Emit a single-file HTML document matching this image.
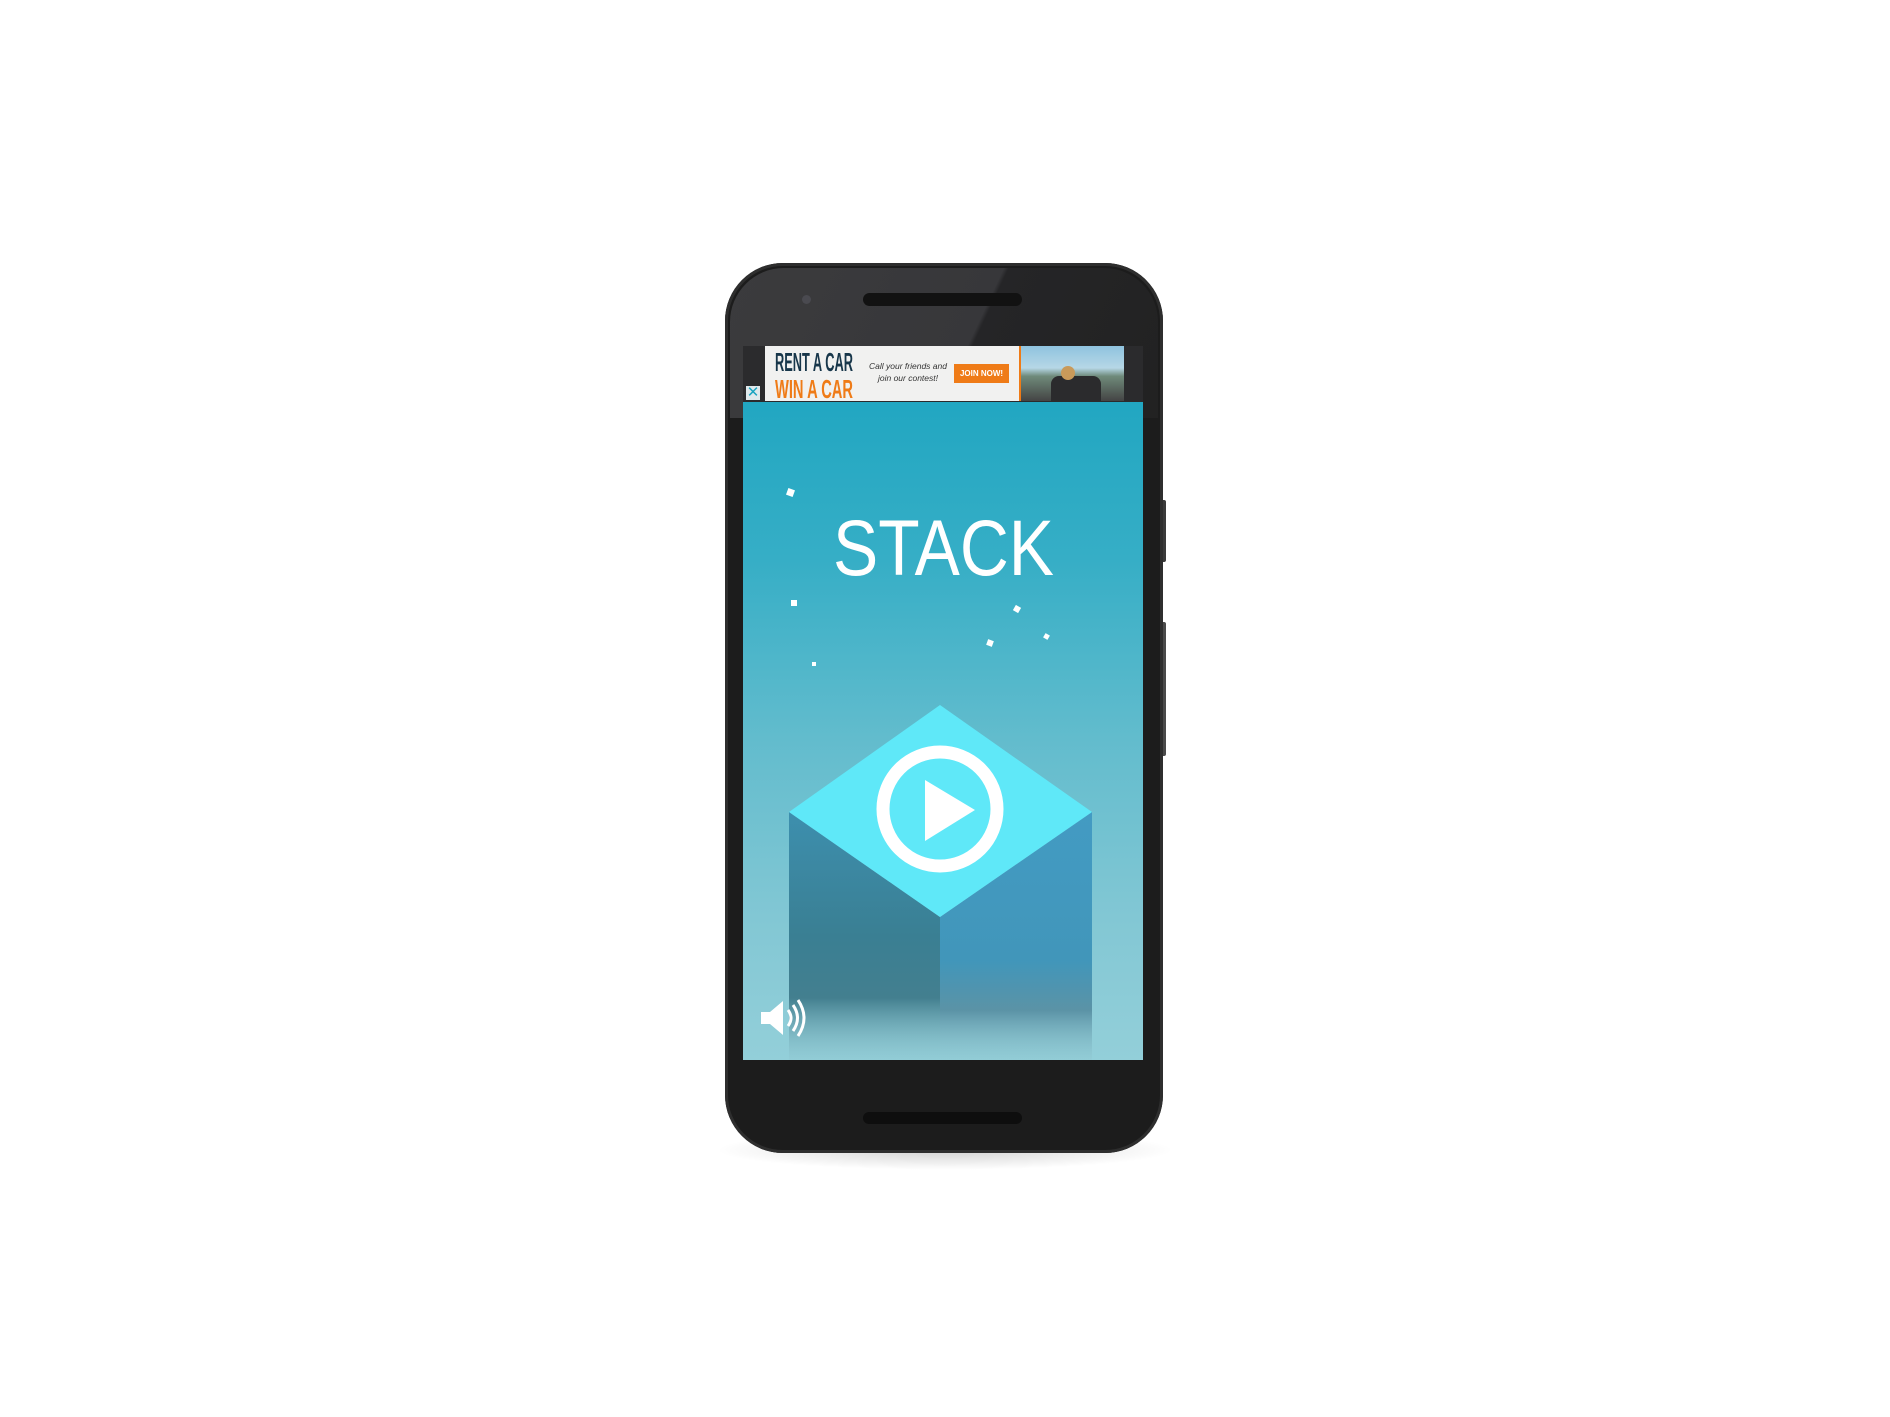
<!DOCTYPE html>
<html><head><meta charset="utf-8"><style>
html,body{margin:0;padding:0;background:#fff;}
body{width:1890px;height:1417px;position:relative;overflow:hidden;font-family:"Liberation Sans",sans-serif;}
.abs{position:absolute;}
</style></head><body>
<div class="abs" style="left:715px;top:1130px;width:460px;height:40px;border-radius:50%;background:radial-gradient(ellipse at center,rgba(0,0,0,0.18),rgba(0,0,0,0) 70%);"></div>
<div class="abs" style="left:1159px;top:500px;width:7px;height:62px;background:#3a3a3a;border-radius:2px;"></div>
<div class="abs" style="left:1159px;top:622px;width:7px;height:134px;background:#4a4a4a;border-radius:2px;"></div>
<div class="abs" style="left:725px;top:263px;width:438px;height:890px;border-radius:58px;background:#1c1c1c;box-shadow:inset 0 0 0 3px #2e2e2e;"></div>
<div class="abs" style="left:730px;top:268px;width:428px;height:150px;border-radius:54px 54px 0 0;background:linear-gradient(115deg,#3b3b3d 0%,#37373a 55%,#252527 56%,#222 100%);"></div>
<div class="abs" style="left:863px;top:293px;width:159px;height:13px;border-radius:7px;background:#121212;"></div>
<div class="abs" style="left:863px;top:1112px;width:159px;height:12px;border-radius:6px;background:#0e0e0e;"></div>
<div class="abs" style="left:802px;top:295px;width:9px;height:9px;border-radius:50%;background:#4a4a50;"></div>
<div class="abs" style="left:743px;top:346px;width:400px;height:714px;background:linear-gradient(#1aa4c0 0%,#36aec6 30%,#62bccd 55%,#82c7d4 80%,#93cfd9 100%);overflow:hidden;">
  <div class="abs" style="left:0;top:0;width:400px;height:56px;background:#2b2b2d;"></div>
  <div class="abs" style="left:3px;top:40px;width:14px;height:14px;background:#dfe9ec;color:#1aa4c0;font-size:15px;line-height:14px;text-align:center;">✕</div>
  <div class="abs" style="left:22px;top:0;width:357px;height:55px;background:#f1f1f0;">
    <svg class="abs" style="left:0;top:0" width="100" height="55">
      <text x="10" y="25" font-family="Liberation Sans, sans-serif" font-weight="bold" font-size="26" fill="#17364a" textLength="78" lengthAdjust="spacingAndGlyphs">RENT A CAR</text>
      <text x="10" y="52" font-family="Liberation Sans, sans-serif" font-weight="bold" font-size="26" fill="#ef7b17" textLength="78" lengthAdjust="spacingAndGlyphs">WIN A CAR</text>
    </svg>
    <div class="abs" style="left:100px;top:14px;width:86px;font-size:8.5px;line-height:12px;font-style:italic;color:#333;text-align:center;white-space:nowrap;">Call your friends and<br>join our contest!</div>
    <div class="abs" style="left:189px;top:18px;width:55px;height:19px;background:#ef7b17;color:#fff;font-size:8px;font-weight:bold;line-height:19px;text-align:center;">JOIN NOW!</div>
    <div class="abs" style="left:254px;top:0;width:103px;height:55px;background:linear-gradient(#8fc3df 0%,#b6d7e6 40%,#6f8a7a 55%,#444 100%);border-left:2px solid #ef7b17;">
      <div class="abs" style="left:30px;top:30px;width:50px;height:25px;background:#2b2b2d;border-radius:8px 8px 0 0;"></div>
      <div class="abs" style="left:40px;top:20px;width:14px;height:14px;border-radius:50%;background:#c99a5a;"></div>
    </div>
  </div>
  <div class="abs" style="left:44px;top:143px;width:7px;height:7px;background:#fff;transform:rotate(20deg);"></div>
  <div class="abs" style="left:48px;top:254px;width:6px;height:6px;background:#fff;"></div>
  <div class="abs" style="left:69px;top:316px;width:4px;height:4px;background:#fff;"></div>
  <div class="abs" style="left:271px;top:260px;width:6px;height:6px;background:#fff;transform:rotate(30deg);"></div>
  <div class="abs" style="left:244px;top:294px;width:6px;height:6px;background:#fff;transform:rotate(20deg);"></div>
  <div class="abs" style="left:301px;top:288px;width:5px;height:5px;background:#fff;transform:rotate(30deg);"></div>
  <svg class="abs" style="left:0;top:0" width="400" height="714" viewBox="0 0 400 714">
    <defs>
      <linearGradient id="lf" x1="0" y1="466" x2="0" y2="714" gradientUnits="userSpaceOnUse"><stop offset="0" stop-color="#3d8fae"/><stop offset="0.5" stop-color="#3a7f93"/><stop offset="0.75" stop-color="#437f8f"/><stop offset="1" stop-color="#8fc5cf" stop-opacity="0.3"/></linearGradient>
      <linearGradient id="rf" x1="0" y1="466" x2="0" y2="714" gradientUnits="userSpaceOnUse"><stop offset="0" stop-color="#439bc3"/><stop offset="0.6" stop-color="#4196ba"/><stop offset="0.8" stop-color="#5b93a6"/><stop offset="1" stop-color="#8fc5cf" stop-opacity="0.3"/></linearGradient>
    </defs>
    <text x="90" y="229" font-family="Liberation Sans, sans-serif" font-size="79" fill="#fff" textLength="221" lengthAdjust="spacingAndGlyphs">STACK</text>
    <polygon points="46,466 197,571 197,714 46,714" fill="url(#lf)"/>
    <polygon points="197,571 349,466 349,714 197,714" fill="url(#rf)"/>
    <polygon points="197,359 349,466 197,571 46,466" fill="#5fe8f8"/>
    <circle cx="197" cy="463" r="57" fill="none" stroke="#fff" stroke-width="13"/>
    <polygon points="182,434 232,464 182,495" fill="#fff"/>
    <polygon points="18,666 27,666 40,655 40,689 27,678 18,678" fill="#fff"/>
    <path d="M45,664 Q51,672 45,680" stroke="#fff" stroke-width="3" fill="none"/>
    <path d="M50,659 Q59,672 50,685" stroke="#fff" stroke-width="3" fill="none"/>
    <path d="M55,654 Q67,672 55,690" stroke="#fff" stroke-width="3" fill="none"/>
  </svg>
</div>
</body></html>
